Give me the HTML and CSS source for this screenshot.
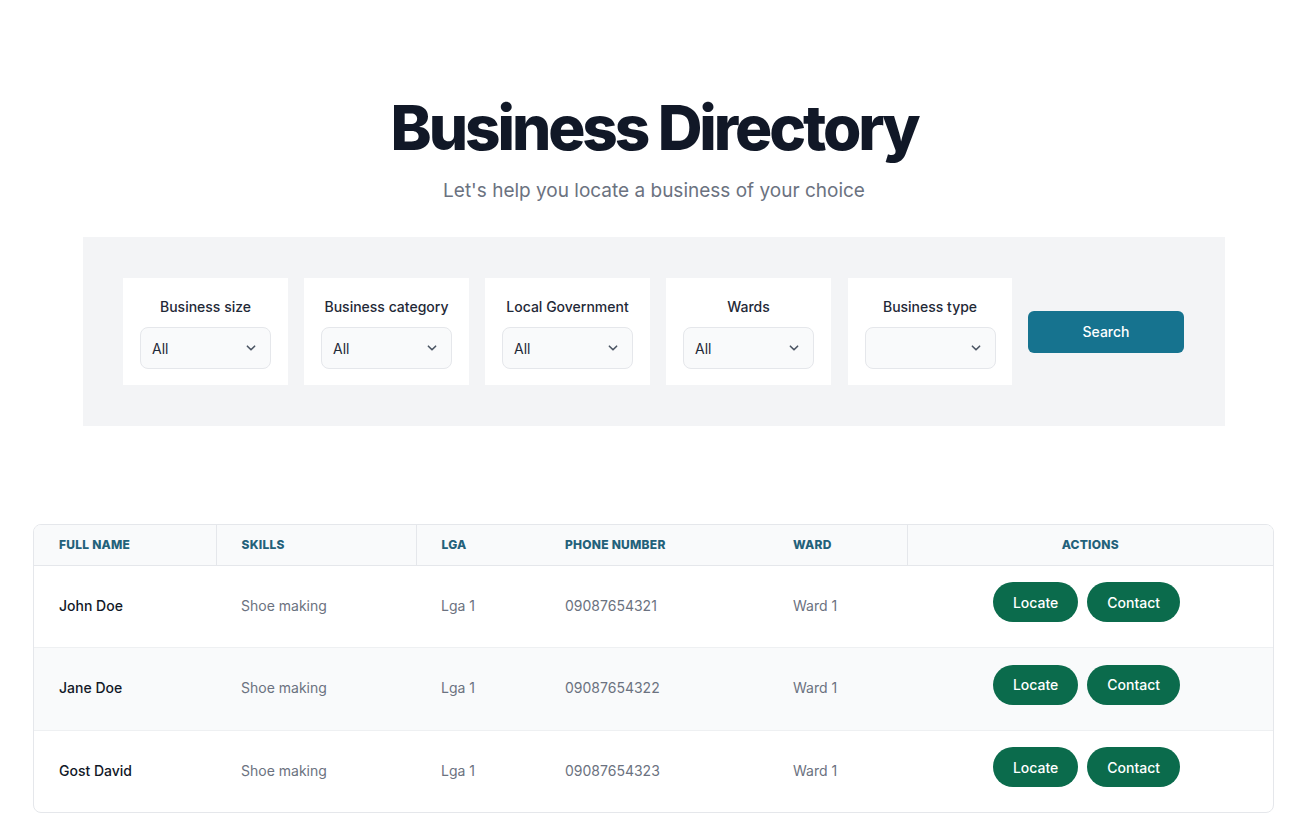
FILE: index.html
```html
<!DOCTYPE html>
<html lang="en">
<head>
<meta charset="utf-8">
<title>Business Directory</title>
<link rel="stylesheet" href="styles.css">
</head>
<body>
<header class="hero">
  <h1 class="title">Business Directory</h1>
  <p class="subtitle">Let's help you locate a business of your choice</p>
</header>

<section class="filters">
  <div class="filter-card">
    <label class="filter-label">Business size</label>
    <div class="select"><span>All</span><svg class="chev" viewBox="0 0 20 20"><path d="M6 8l4 4 4-4" /></svg></div>
  </div>
  <div class="filter-card">
    <label class="filter-label">Business category</label>
    <div class="select"><span>All</span><svg class="chev" viewBox="0 0 20 20"><path d="M6 8l4 4 4-4" /></svg></div>
  </div>
  <div class="filter-card">
    <label class="filter-label">Local Government</label>
    <div class="select"><span>All</span><svg class="chev" viewBox="0 0 20 20"><path d="M6 8l4 4 4-4" /></svg></div>
  </div>
  <div class="filter-card">
    <label class="filter-label">Wards</label>
    <div class="select"><span>All</span><svg class="chev" viewBox="0 0 20 20"><path d="M6 8l4 4 4-4" /></svg></div>
  </div>
  <div class="filter-card">
    <label class="filter-label">Business type</label>
    <div class="select"><span></span><svg class="chev" viewBox="0 0 20 20"><path d="M6 8l4 4 4-4" /></svg></div>
  </div>
  <button class="search-btn">Search</button>
</section>

<section class="table-wrap">
  <table class="dir-table">
    <colgroup>
      <col class="c1"><col class="c2"><col class="c3"><col class="c4"><col class="c5"><col class="c6">
    </colgroup>
    <thead>
      <tr>
        <th class="bordered">Full name</th>
        <th class="bordered">Skills</th>
        <th>LGA</th>
        <th>Phone number</th>
        <th class="bordered">Ward</th>
        <th class="center">Actions</th>
      </tr>
    </thead>
    <tbody>
      <tr>
        <td class="name">John Doe</td>
        <td>Shoe making</td>
        <td>Lga 1</td>
        <td>09087654321</td>
        <td>Ward 1</td>
        <td class="actions"><div class="btns"><button class="pill">Locate</button><button class="pill">Contact</button></div></td>
      </tr>
      <tr class="alt">
        <td class="name">Jane Doe</td>
        <td>Shoe making</td>
        <td>Lga 1</td>
        <td>09087654322</td>
        <td>Ward 1</td>
        <td class="actions"><div class="btns"><button class="pill">Locate</button><button class="pill">Contact</button></div></td>
      </tr>
      <tr>
        <td class="name">Gost David</td>
        <td>Shoe making</td>
        <td>Lga 1</td>
        <td>09087654323</td>
        <td>Ward 1</td>
        <td class="actions"><div class="btns"><button class="pill">Locate</button><button class="pill">Contact</button></div></td>
      </tr>
    </tbody>
  </table>
</section>
</body>
</html>
```

FILE: styles.css
```css
* { box-sizing: border-box; }
html, body { margin: 0; padding: 0; background: #ffffff; }
body {
  font-family: Inter, "Noto Sans", "Liberation Sans", sans-serif;
  color: #111827;
}

.hero {
  padding-top: 92px;
  text-align: center;
}
.title {
  margin: 0;
  font-size: 62px;
  line-height: 72px;
  font-weight: 800;
  letter-spacing: -0.05em;
  color: #111827;
}
.subtitle {
  margin: 13px 0 0;
  font-size: 19px;
  line-height: 28px;
  color: #6b7280;
}

.filters {
  width: 1142px;
  margin: 32px auto 0;
  background: #f3f4f6;
  padding: 41px 40px;
  display: flex;
  align-items: center;
  gap: 16px;
}
.filter-card {
  width: 165px;
  height: 107px;
  background: #ffffff;
  padding: 20px 17px 0;
  display: flex;
  flex-direction: column;
  align-items: center;
}
.filter-card:nth-child(5) { width: 164px; margin-left: 1px; }
.filter-label {
  font-size: 14px;
  line-height: 18px;
  font-weight: 500;
  color: #1f2937;
}
.select {
  margin-top: 11px;
  width: 131px;
  height: 42px;
  border: 1px solid #e5e7eb;
  border-radius: 8px;
  background: #f9fafb;
  display: flex;
  align-items: center;
  justify-content: space-between;
  padding: 0 10px 0 11px;
  font-size: 14px;
  color: #1f2937;
}
.chev {
  width: 18px;
  height: 18px;
  fill: none;
  stroke: #4b5563;
  stroke-width: 1.8;
  stroke-linecap: round;
  stroke-linejoin: round;
}
.search-btn {
  width: 156px;
  height: 42px;
  border: none;
  border-radius: 6px;
  background: #16738f;
  color: #ffffff;
  font-family: inherit;
  font-size: 14px;
  font-weight: 500;
}

.table-wrap {
  margin: 98px 34px 0 33px;
  border: 1px solid #e5e7eb;
  border-radius: 8px;
  overflow: hidden;
}
.dir-table {
  width: 100%;
  border-collapse: collapse;
  table-layout: fixed;
}
.c1 { width: 182px; }
.c2 { width: 200px; }
.c3 { width: 124px; }
.c4 { width: 228px; }
.c5 { width: 139px; }
.c6 { width: auto; }

.dir-table thead tr {
  background: #f9fafb;
  border-bottom: 1px solid #e5e7eb;
}
.dir-table th {
  height: 40px;
  padding: 0 0 0 25px;
  text-align: left;
  font-size: 12px;
  font-weight: 800;
  text-transform: uppercase;
  letter-spacing: 0.02em;
  color: #23617a;
}
.dir-table th.bordered { border-right: 1px solid #e5e7eb; }
.dir-table th.center { text-align: center; padding: 0; }

.dir-table td {
  height: 82px;
  padding: 0 0 2px 25px;
  font-size: 14px;
  color: #6b7280;
}
.dir-table tr.alt td { height: 83px; }
.dir-table tbody tr { border-bottom: 1px solid #eef0f2; }
.dir-table tbody tr:last-child { border-bottom: none; }
.dir-table tr.alt { background: #f9fafb; }
.dir-table td.name {
  color: #111827;
  font-weight: 500;
}
.dir-table td.actions { padding: 0; }
.btns {
  display: flex;
  justify-content: center;
  gap: 9px;
  margin-top: -8px;
  padding-right: 7px;
}
.pill {
  height: 40px;
  padding: 0 20px;
  border: none;
  border-radius: 999px;
  background: #0b6b4c;
  color: #ffffff;
  font-family: inherit;
  font-size: 14px;
  font-weight: 500;
}
```
